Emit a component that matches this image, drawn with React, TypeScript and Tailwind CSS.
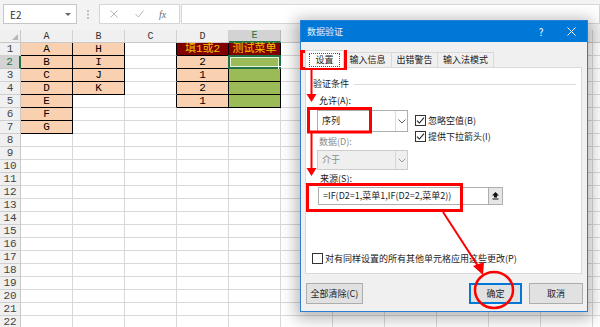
import React from 'react';

const COLS = ['A', 'B', 'C', 'D', 'E', 'F', 'G', 'H', 'I', 'J', 'K', 'L'];
const ROWS = Array.from({ length: 22 }, (_, i) => i + 1);

const bordered = (c: number, r: number) => {
  if (c === 0 && r >= 1 && r <= 7) return true;
  if (c === 1 && r >= 1 && r <= 4) return true;
  if ((c === 3 || c === 4) && r >= 1 && r <= 5) return true;
  return false;
};

const TEXT: Record<string, string> = {
  A1: 'A', A2: 'B', A3: 'C', A4: 'D', A5: 'E', A6: 'F', A7: 'G',
  B1: 'H', B2: 'I', B3: 'J', B4: 'K',
  D1: '填1或2', E1: '测试菜单',
  D2: '2', D3: '1', D4: '2', D5: '1',
};

const cellFont = { fontFamily: '"Liberation Mono", "Noto Sans CJK SC", monospace' };
const uiFont = { fontFamily: '"Noto Sans CJK SC", "Noto Sans", sans-serif' };

function Cell({ c, r }: { c: number; r: number }) {
  const key = COLS[c] + r;
  const text = TEXT[key];
  const br = bordered(c, r) || bordered(c + 1, r);
  const bb = bordered(c, r) || bordered(c, r + 1);
  let fill = 'bg-white';
  if ((c === 0 && r <= 7) || (c === 1 && r <= 4) || (c === 3 && r >= 2 && r <= 5)) fill = 'bg-[#f9d0b0]';
  if (c === 4 && r >= 2 && r <= 5) fill = 'bg-[#9bbb59]';
  const header = (c === 3 || c === 4) && r === 1;
  return (
    <div
      className={`relative w-[52px] shrink-0 h-full border-r border-b flex items-center justify-center ${
        br ? 'border-r-black' : 'border-r-[#d9d9d9]'
      } ${bb ? 'border-b-black' : 'border-b-[#d9d9d9]'} ${header ? 'bg-[#800000] text-[#f5c400] text-[11px]' : fill + ' text-black text-[11px]'}`}
    >
      {text && <span className="leading-[12px] whitespace-nowrap">{text}</span>}
      {c === 4 && r === 2 && (
        <>
          <div className="absolute left-[-1px] top-[-1px] w-[53px] h-[14px] border-2 border-[#217346] shadow-[inset_0_0_0_1px_#e8f3e0]" />
          <div className="absolute right-[-4px] bottom-[-4px] w-[6px] h-[6px] bg-[#217346] border border-white" />
          <div className="absolute left-[54px] top-[2px] w-[10px] h-[11px] bg-[#f7f7f7] border border-[#a6a6a6] flex items-center justify-center">
            <svg width="5" height="3" viewBox="0 0 5 3">
              <polygon points="0,0 5,0 2.5,3" fill="#444" />
            </svg>
          </div>
        </>
      )}
    </div>
  );
}

function Check({ checked }: { checked: boolean }) {
  return (
    <span className="w-[11px] h-[11px] border border-[#333] bg-white flex items-center justify-center shrink-0">
      {checked && (
        <svg width="9" height="9" viewBox="0 0 9 9">
          <path d="M1 4.6 L3.4 7 L8 1.6" fill="none" stroke="#222" strokeWidth="1.1" />
        </svg>
      )}
    </span>
  );
}

function Chevron({ color }: { color: string }) {
  return (
    <svg width="8" height="5" viewBox="0 0 8 5">
      <path d="M0.5 0.5 L4 4 L7.5 0.5" fill="none" stroke={color} strokeWidth="1" />
    </svg>
  );
}

export default function App() {
  return (
    <div className="relative w-[600px] h-[327px] overflow-hidden bg-white" style={cellFont}>
      {/* formula bar */}
      <div className="h-[30px] bg-[#f3f3f3] flex items-start pt-[4px] pl-[3px]">
        <div className="w-[74px] h-[20px] bg-white border border-[#c6c6c6] flex items-center pl-[6px] pr-[5px] text-[10px] text-[#333]" style={uiFont}>
          <span>E2</span>
          <svg className="ml-auto" width="6" height="3" viewBox="0 0 6 3">
            <polygon points="0,0 6,0 3,3" fill="#666" />
          </svg>
        </div>
        <div className="w-[22px] h-[20px] flex items-center justify-center">
          <svg width="2" height="9" viewBox="0 0 2 9">
            <rect x="0" y="0" width="2" height="2" fill="#c0c0c0" />
            <rect x="0" y="3.5" width="2" height="2" fill="#c0c0c0" />
            <rect x="0" y="7" width="2" height="2" fill="#c0c0c0" />
          </svg>
        </div>
        <div className="w-[81px] h-[20px] bg-white border border-[#d6d6d6] flex items-center">
          <svg className="ml-[10px]" width="8" height="8" viewBox="0 0 8 8">
            <path d="M0.5 0.5 L7.5 7.5 M7.5 0.5 L0.5 7.5" stroke="#b5b5b5" strokeWidth="1" />
          </svg>
          <svg className="ml-[17px]" width="9" height="8" viewBox="0 0 9 8">
            <path d="M0.5 4 L3.5 7 L8.5 0.5" fill="none" stroke="#b5b5b5" strokeWidth="1" />
          </svg>
          <span className="ml-[15px] text-[10px] italic text-[#6b6b6b]" style={{ fontFamily: '"Liberation Serif", serif' }}>
            fx
          </span>
        </div>
        <div className="flex-1 h-[20px] bg-white border border-[#d6d6d6] ml-[1px]" />
      </div>

      {/* column header */}
      <div className="flex h-[13px]">
        <div className="w-[21px] shrink-0 h-full bg-[#f0f0f0] border-r border-b border-[#c8c8c8] relative">
          <svg className="absolute right-[2px] bottom-[2px]" width="6" height="6" viewBox="0 0 6 6">
            <polygon points="6,0 6,6 0,6" fill="#b8b8b8" />
          </svg>
        </div>
        {COLS.map((col, i) => (
          <div
            key={col}
            className={`w-[52px] shrink-0 h-full border-r flex items-center justify-center text-[10px] ${
              i === 4
                ? 'bg-[#d3d3d3] text-[#217346] border-r-[#b8b8b8] border-b-2 border-b-[#217346]'
                : 'bg-[#f0f0f0] text-[#333] border-r-[#d0d0d0] border-b border-b-[#c8c8c8]'
            }`}
          >
            {i < 5 && <span className="leading-[11px]">{col}</span>}
          </div>
        ))}
      </div>

      {/* rows */}
      {ROWS.map((r) => (
        <div key={r} className="flex h-[13px]">
          <div
            className={`w-[21px] shrink-0 h-full border-b flex items-center justify-center text-[11px] ${
              r === 2
                ? 'bg-[#d3d3d3] text-[#217346] border-r-2 border-r-[#217346] border-b-[#c8c8c8]'
                : 'bg-[#f0f0f0] text-[#444] border-r border-r-[#c8c8c8] border-b-[#d0d0d0]'
            }`}
          >
            <span className="leading-[12px]">{r}</span>
          </div>
          {COLS.map((_, c) => (
            <Cell key={c} c={c} r={r} />
          ))}
        </div>
      ))}

      {/* dialog */}
      <div
        className="absolute left-[300px] top-[20px] w-[288px] h-[292px] border border-[#2a7fd4] bg-[#f0f0f0] shadow-[0_3px_14px_4px_rgba(0,0,0,0.28)] flex flex-col text-[9px] text-[#1a1a1a]"
        style={uiFont}
      >
        <div className="h-[21px] shrink-0 bg-[#0078d7] flex items-center text-white pl-[6px] text-[9px]">
          <span className="text-[#e8f1fb]">数据验证</span>
          <span className="ml-auto w-[10px] text-center mr-[21px] text-[10px]">?</span>
          <svg className="mr-[11px]" width="9" height="9" viewBox="0 0 9 9">
            <path d="M0.5 0.5 L8.5 8.5 M8.5 0.5 L0.5 8.5" stroke="#ffffff" strokeWidth="1" />
          </svg>
        </div>
        <div className="flex-1 pl-[4px] pt-[8px] flex flex-col">
          {/* tabs */}
          <div className="flex items-end h-[17px]">
            <div className="h-[18px] w-[39px] bg-white border border-[#d9d9d9] border-b-0 relative z-10 -mb-px flex items-center justify-center">
              <span className="border border-dotted border-[#555] px-[5px] leading-[10px] py-[1px]">设置</span>
            </div>
            <div className="h-[15px] w-[48px] bg-[#f0f0f0] border border-[#d9d9d9] border-b-0 border-l-0 flex items-center justify-center leading-[10px]">
              输入信息
            </div>
            <div className="h-[15px] w-[46px] bg-[#f0f0f0] border border-[#d9d9d9] border-b-0 border-l-0 flex items-center justify-center leading-[10px]">
              出错警告
            </div>
            <div className="h-[15px] w-[56px] bg-[#f0f0f0] border border-[#d9d9d9] border-b-0 border-l-0 flex items-center justify-center leading-[10px]">
              输入法模式
            </div>
          </div>
          {/* panel */}
          <div className="w-[277px] h-[207px] bg-white border border-[#d9d9d9] flex flex-col">
            <div className="flex items-center h-[12px] mt-[10px] pl-[7px] pr-[5px]">
              <span className="leading-[12px]">验证条件</span>
              <div className="flex-1 h-px bg-[#dcdcdc] ml-[5px]" />
            </div>
            <div className="flex">
              <div className="flex flex-col pl-[11px] w-[102px]">
                <span className="mt-[5px] h-[12px] leading-[12px] pl-[2px]">允许(A):</span>
                <div className="mt-[3px] h-[22px] w-[91px] bg-white border border-[#adadad] flex items-center">
                  <span className="pl-[4px] flex-1 leading-[12px]">序列</span>
                  <div className="w-[12px] h-full border-l border-[#dadada] flex items-center justify-center">
                    <Chevron color="#606060" />
                  </div>
                </div>
                <span className="mt-[4px] h-[12px] leading-[12px] pl-[2px] text-[#8a8a8a]">数据(D):</span>
                <div className="mt-[2px] h-[20px] w-[91px] bg-[#efefef] border border-[#cccccc] flex items-center text-[#8a8a8a]">
                  <span className="pl-[4px] flex-1 leading-[12px]">介于</span>
                  <div className="w-[12px] h-full border-l border-[#d6d6d6] flex items-center justify-center">
                    <Chevron color="#9a9a9a" />
                  </div>
                </div>
              </div>
              <div className="flex flex-col pl-[7px] pt-[25px]">
                <div className="flex items-center h-[11px] gap-[2px]">
                  <Check checked />
                  <span className="leading-[11px]">忽略空值(B)</span>
                </div>
                <div className="flex items-center h-[11px] gap-[2px] mt-[5px]">
                  <Check checked />
                  <span className="leading-[11px]">提供下拉箭头(I)</span>
                </div>
              </div>
            </div>
            <span className="mt-[3px] h-[12px] leading-[12px] pl-[14px]">来源(S):</span>
            <div className="mt-[2px] flex ml-[12px] h-[18px]">
              <div className="w-[171px] h-full bg-white border border-[#adadad] flex items-center pl-[4px]">
                <span className="leading-[12px] whitespace-nowrap">=IF(D2=1,菜单1,IF(D2=2,菜单2))</span>
              </div>
              <div className="w-[14px] h-full bg-[#e6e6e6] border border-[#adadad] border-l-0 flex items-center justify-center">
                <svg width="7" height="8" viewBox="0 0 7 8">
                  <polygon points="3.5,0 7,3.5 5,3.5 5,5.5 2,5.5 2,3.5 0,3.5" fill="#111" />
                  <rect x="0.5" y="6.5" width="6" height="1" fill="#111" />
                </svg>
              </div>
            </div>
            <div className="flex items-center h-[11px] gap-[2px] mt-[48px] pl-[6px]">
              <Check checked={false} />
              <span className="leading-[11px] whitespace-nowrap">对有同样设置的所有其他单元格应用这些更改(P)</span>
            </div>
          </div>
          {/* buttons */}
          <div className="flex mt-[9px] h-[21px]">
            <div className="ml-[1px] w-[57px] h-full bg-[#e1e1e1] border border-[#adadad] flex items-center justify-center">
              全部清除(C)
            </div>
            <div className="ml-auto w-[53px] h-full bg-[#e1e1e1] border-2 border-[#0078d7] flex items-center justify-center">
              确定
            </div>
            <div className="ml-[7px] mr-[4px] w-[54px] h-full bg-[#e1e1e1] border border-[#adadad] flex items-center justify-center">
              取消
            </div>
          </div>
        </div>
      </div>

      {/* red annotations */}
      <svg className="absolute left-0 top-0 pointer-events-none" width="600" height="327" viewBox="0 0 600 327">
        <rect x="301.5" y="51.5" width="44" height="17" fill="none" stroke="#ff0000" strokeWidth="3" />
        <line x1="311.5" y1="70" x2="311.5" y2="96" stroke="#ff0000" strokeWidth="2" />
        <polygon points="306.5,94 316.5,94 311.5,102" fill="#ff0000" />
        <rect x="308.5" y="108.5" width="62" height="23.5" fill="none" stroke="#ff0000" strokeWidth="3" />
        <line x1="311.5" y1="133" x2="311.5" y2="170" stroke="#ff0000" strokeWidth="2" />
        <polygon points="306.5,168 316.5,168 311.5,176" fill="#ff0000" />
        <rect x="307.5" y="184.5" width="154" height="26" fill="none" stroke="#ff0000" strokeWidth="3" />
        <line x1="443" y1="212" x2="478" y2="266" stroke="#ff0000" strokeWidth="2" />
        <polygon points="473,266 484,262 483,275" fill="#ff0000" />
        <ellipse cx="494" cy="290" rx="19" ry="18" fill="none" stroke="#ff0000" strokeWidth="2.5" />
      </svg>
    </div>
  );
}
